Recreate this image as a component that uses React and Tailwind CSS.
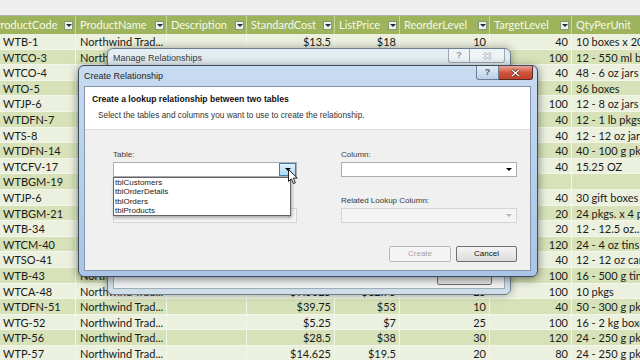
import React from 'react';

const cols = ['ProductCode', 'ProductName', 'Description', 'StandardCost', 'ListPrice', 'ReorderLevel', 'TargetLevel', 'QtyPerUnit'];
const right = [false, false, false, true, true, true, true, false];

const rows = [
  ['WTB-1', 'Northwind Trad...', '', '$13.5', '$18', '10', '40', '10 boxes x 20 bags'],
  ['WTCO-3', 'Northwind Trad...', '', '$7.5', '$10', '25', '100', '12 - 550 ml b...'],
  ['WTCO-4', 'Northwind Trad...', '', '$16.5', '$22', '10', '40', '48 - 6 oz jars'],
  ['WTO-5', 'Northwind Trad...', '', '$16.0125', '$21.35', '10', '40', '36 boxes'],
  ['WTJP-6', 'Northwind Trad...', '', '$18.75', '$25', '25', '100', '12 - 8 oz jars'],
  ['WTDFN-7', 'Northwind Trad...', '', '$22.5', '$30', '10', '40', '12 - 1 lb pkgs.'],
  ['WTS-8', 'Northwind Trad...', '', '$30', '$40', '10', '40', '12 - 12 oz jars'],
  ['WTDFN-14', 'Northwind Trad...', '', '$17.4375', '$23.25', '10', '40', '40 - 100 g pkgs.'],
  ['WTCFV-17', 'Northwind Trad...', '', '$29.25', '$39', '10', '40', '15.25 OZ'],
  ['WTBGM-19', 'Northwind Trad...', '', '$6.9', '$9.2', '5', '', ''],
  ['WTJP-6', 'Northwind Trad...', '', '$60.75', '$81', '10', '40', '30 gift boxes'],
  ['WTBGM-21', 'Northwind Trad...', '', '$7.5', '$10', '5', '20', '24 pkgs. x 4 p...'],
  ['WTB-34', 'Northwind Trad...', '', '$10.5', '$14', '15', '20', '12 - 12.5 oz...'],
  ['WTCM-40', 'Northwind Trad...', '', '$13.8', '$18.4', '30', '120', '24 - 4 oz tins'],
  ['WTSO-41', 'Northwind Trad...', '', '$7.2375', '$9.65', '10', '40', '12 - 12 oz cans'],
  ['WTB-43', 'Northwind Trad...', '', '$34.5', '$46', '25', '100', '16 - 500 g tins'],
  ['WTCA-48', 'Northwind Trad...', '', '$9.5625', '$12.75', '25', '100', '10 pkgs'],
  ['WTDFN-51', 'Northwind Trad...', '', '$39.75', '$53', '10', '40', '50 - 300 g pkgs.'],
  ['WTG-52', 'Northwind Trad...', '', '$5.25', '$7', '25', '100', '16 - 2 kg boxes'],
  ['WTP-56', 'Northwind Trad...', '', '$28.5', '$38', '30', '120', '24 - 250 g pkgs.'],
  ['WTP-57', 'Northwind Trad...', '', '$14.625', '$19.5', '20', '80', '24 - 250 g pkgs.'],
];

const gridCols = 'grid grid-cols-[86px_91px_80px_88px_65px_90px_82px_88px]';

const Caret = ({ color = 'border-t-black' }) => (
  <span className={`w-0 h-0 border-x-[3px] border-x-transparent border-t-[3px] ${color}`} />
);

const FilterButton = () => (
  <span className="flex items-center justify-center w-[9px] h-[9px] mr-[2px] bg-[#eef0ea] border border-[#8a9675] shrink-0">
    <Caret color="border-t-[#1f2a44]" />
  </span>
);

const Combo = ({ active, disabled }) => (
  <div className={`h-[15px] flex items-stretch justify-end border ${disabled ? 'bg-[#f4f4f4] border-[#d5d5d5]' : 'bg-white border-[#abadb3]'}`}>
    {active ? (
      <span className="w-[17px] flex items-center justify-center border border-[#3c7fb1] bg-gradient-to-b from-[#e6f3fc] to-[#a9d6f5]">
        <Caret color="border-t-black" />
      </span>
    ) : (
      <span className="w-[15px] flex items-center justify-center">
        <Caret color={disabled ? 'border-t-[#b4b4b4]' : 'border-t-black'} />
      </span>
    )}
  </div>
);

const Label = ({ children, className = '' }) => (
  <div className={`h-[12px] leading-[12px] mb-[1px] text-[8px] text-[#3a3a3a] ${className}`}>{children}</div>
);

const App = () => {
  return (
    <div className="relative w-[640px] h-[360px] overflow-hidden bg-white">
      <div className="h-[16px] bg-[#eeeeee] border-b border-[#b0b0b0]" />

      <div className="-ml-[10px] w-[680px] font-['Lato',sans-serif] text-[11px]">
        <div className={`${gridCols} h-[18px] bg-[#9db45c]`}>
          {cols.map(c => (
            <div key={c} className="flex items-center justify-between pl-[4px] border-r border-[#c9d6a2] text-[#f5f8ec] overflow-hidden whitespace-nowrap">
              <span>{c}</span>
              <FilterButton />
            </div>
          ))}
        </div>

        {rows.map((r, i) => (
          <div key={i} className={`${gridCols} h-[15.6px] border-b border-[#f3f6ea] ${i % 2 === 0 ? 'bg-[#ecf0df]' : 'bg-[#d7e2b9]'}`}>
            {r.map((v, j) => (
              <div
                key={j}
                className={`leading-[15px] overflow-hidden whitespace-nowrap text-[#1a1a1a] border-r border-[#f3f6ea] ${right[j] ? 'text-right pr-[3px]' : j === 0 ? 'pl-[13px]' : 'pl-[4px]'}`}
              >
                {v}
              </div>
            ))}
          </div>
        ))}
      </div>

      {/* Manage Relationships window, inactive behind */}
      <div className="absolute left-[107px] top-[48px] w-[404px] h-[247px] flex flex-col rounded-[6px] border border-[#6b7c8c] bg-gradient-to-b from-[#e4edf2] to-[#cfdde6] shadow-[0_0_8px_rgba(0,0,0,0.35)] font-['Liberation_Sans',Arial,sans-serif]">
        <div className="h-[17px] flex items-start justify-between">
          <span className="pl-[5px] pt-[4px] text-[9px] leading-[10px] text-[#3b3b3b]">Manage Relationships</span>
          <div className="flex mr-[5px]">
            <span className="w-[22px] h-[14px] flex items-center justify-center border border-[#9aa9b5] border-t-0 rounded-bl-[3px] bg-[#eef3f6] text-[9px] text-[#8a98a4] font-bold">?</span>
            <span className="w-[35px] h-[14px] flex items-center justify-center border border-l-0 border-[#9aa9b5] border-t-0 rounded-br-[3px] bg-[#eef3f6]">
              <svg width="9" height="8" viewBox="0 0 9 8">
                <path d="M1 1 L8 7 M8 1 L1 7" stroke="#8d9aa6" strokeWidth="2.6" />
                <path d="M1 1 L8 7 M8 1 L1 7" stroke="#ffffff" strokeWidth="1.2" />
              </svg>
            </span>
          </div>
        </div>
        <div className="flex-1 mx-[5px] mb-[5px] mt-[1px] bg-[#f3f5f6] border border-[#9fb0bd] flex flex-col justify-end items-end pr-[12px] pb-[3px]">
          <div className="w-[55px] h-[16px] border border-[#707070] rounded-[2px] bg-[#e6e6e6]" />
        </div>
      </div>

      {/* Create Relationship dialog */}
      <div className="absolute left-[78px] top-[65px] w-[460px] h-[212px] flex flex-col rounded-[6px] border border-[#3e4d5e] bg-gradient-to-b from-[#c7dbf1] to-[#a9c4e5] shadow-[0_2px_10px_rgba(0,0,0,0.5)] font-['Liberation_Sans',Arial,sans-serif]">
        <div className="h-[20px] flex items-start justify-between">
          <span className="pl-[5px] pt-[5px] text-[9px] leading-[10px] text-[#1f1f1f]">Create Relationship</span>
          <div className="flex mr-[4px]">
            <span className="w-[23px] h-[14px] flex items-center justify-center border border-[#6b7d92] border-t-0 rounded-bl-[3px] bg-gradient-to-b from-[#e3ecf6] to-[#bcd0e8] text-[9px] text-[#4d5d70] font-bold">?</span>
            <span className="w-[34px] h-[14px] flex items-center justify-center border border-l-0 border-[#5a2b22] border-t-0 rounded-br-[3px] bg-gradient-to-b from-[#e7a493] via-[#d2553f] to-[#c0402b]">
              <svg width="9" height="8" viewBox="0 0 9 8">
                <path d="M1 1 L8 7 M8 1 L1 7" stroke="#5b2218" strokeWidth="2.8" />
                <path d="M1 1 L8 7 M8 1 L1 7" stroke="#ffffff" strokeWidth="1.4" />
              </svg>
            </span>
          </div>
        </div>

        <div className="flex-1 ml-[5px] mr-[6px] mb-[5px] flex flex-col border border-[#8595ab] bg-[#f0f0f0]">
          <div className="h-[43px] bg-white border-b border-[#dfdfdf] pt-[7px]">
            <div className="pl-[7px] text-[8.6px] leading-[10px] font-bold text-[#111]">Create a lookup relationship between two tables</div>
            <div className="pl-[13px] mt-[6px] text-[8.3px] leading-[10px] text-[#333]">Select the tables and columns you want to use to create the relationship.</div>
          </div>

          <div className="flex-1 grid grid-cols-[184px_176px] gap-x-[44px] pl-[28px] pt-[19px]">
            <div className="relative">
              <Label>Table:</Label>
              <Combo active />
              <div className="h-[13px] mt-[18px]" />
              <Combo disabled />
              <div className="absolute left-0 top-[28px] w-[178px] h-[39px] bg-white border border-[#646464] shadow-[1px_2px_3px_rgba(0,0,0,0.3)] text-[8px] leading-[9.3px] text-[#1a1a1a] pl-[1px]">
                <div>tblCustomers</div>
                <div>tblOrderDetails</div>
                <div>tblOrders</div>
                <div>tblProducts</div>
              </div>
            </div>

            <div>
              <Label>Column:</Label>
              <Combo />
              <Label className="mt-[18px]">Related Lookup Column:</Label>
              <Combo disabled />
              <div className="flex justify-end gap-[5px] mt-[23px]">
                <div className="w-[62px] h-[16px] flex items-center justify-center border border-[#b5b9bc] rounded-[2px] bg-[#f4f4f4] text-[8px] text-[#a3a3a3]">Create</div>
                <div className="w-[61px] h-[16px] flex items-center justify-center border border-[#707070] rounded-[2px] bg-gradient-to-b from-[#f4f4f4] to-[#dcdcdc] text-[8px] text-[#111]">Cancel</div>
              </div>
            </div>
          </div>
        </div>
      </div>

      {/* mouse cursor */}
      <svg className="absolute left-[288px] top-[169px]" width="11" height="16" viewBox="0 0 11 16">
        <path d="M0.5 0.5 L0.5 12.5 L3.4 9.8 L5.5 14.6 L7.4 13.8 L5.4 9.1 L9.3 9.1 Z" fill="#ffffff" stroke="#222" strokeWidth="1" strokeLinejoin="round" />
      </svg>
    </div>
  );
};

export default App;
